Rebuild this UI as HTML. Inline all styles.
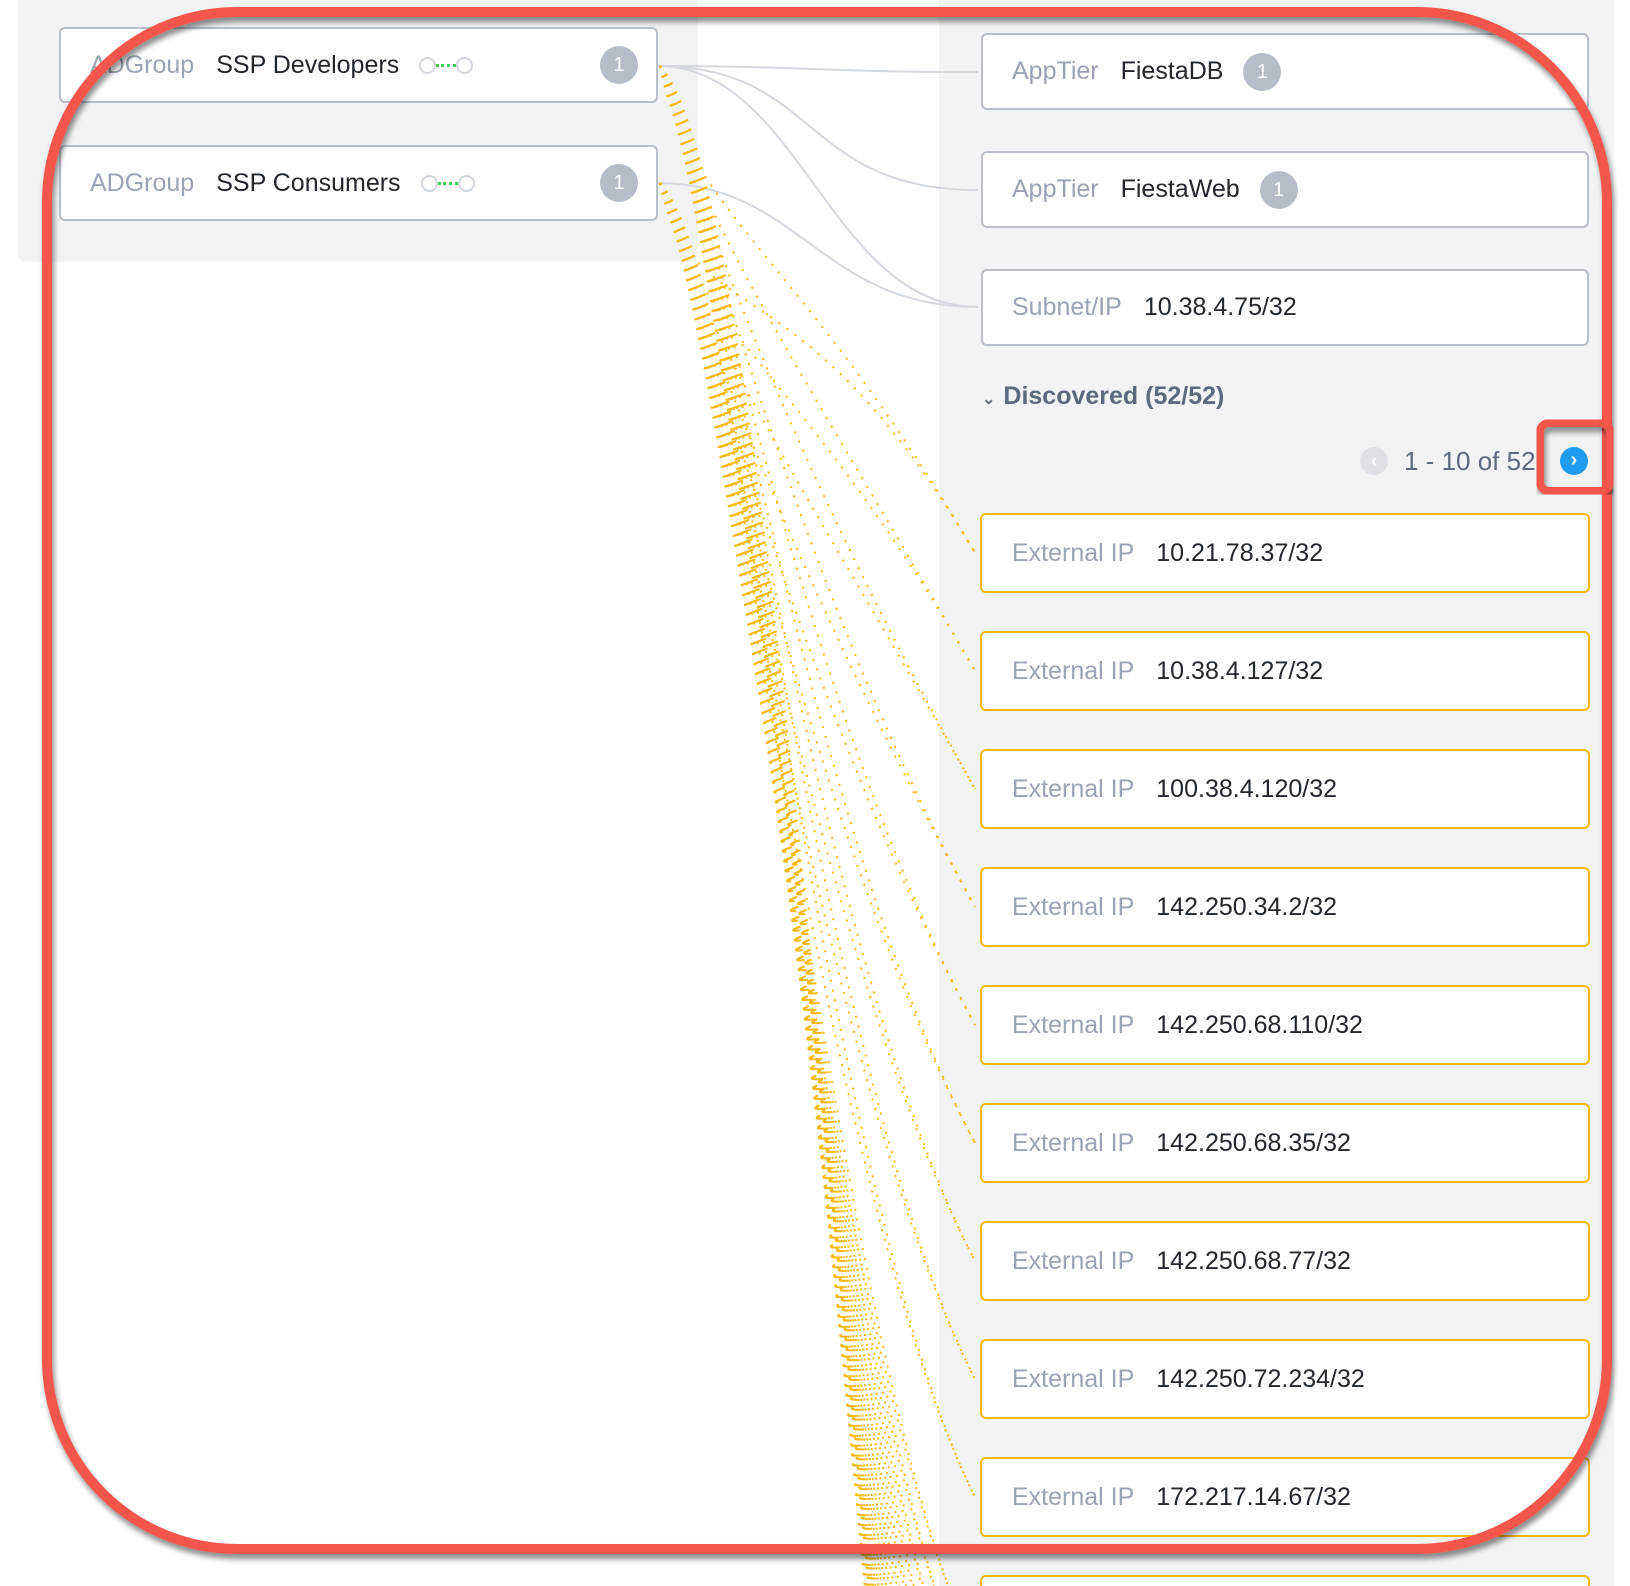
<!DOCTYPE html>
<html style="overflow:hidden;width:1630px;height:1586px"><head><meta charset="utf-8"><style>
*{box-sizing:border-box;margin:0;padding:0}
body{width:1630px;height:1586px;position:relative;overflow:hidden;background:#fff;font-family:"Liberation Sans",sans-serif}
.lp{position:absolute;left:18px;top:0;width:680px;height:262px;background:#f2f3f5;border-radius:0 0 8px 8px}
.rp{position:absolute;left:939px;top:0;width:675px;height:1586px;background:#f2f3f5}
.box{position:absolute;background:#fff;border:2px solid #b8bfcb;border-radius:6px;font-size:25px;display:flex;align-items:center}
.box .k{color:#9aa3b2;margin-right:22px}
.box .v{color:#22272e}
.badge{display:inline-block;width:38px;height:38px;border-radius:50%;background:#b7bdc8;color:#fff;font-size:20px;text-align:center;line-height:38px}
.ext{border-color:#fbb813}
.conn{display:inline-flex;align-items:center;margin-left:20px}
.conn i{display:block;width:17px;height:17px;border:2px solid #d3d7de;border-radius:50%}
.conn b{display:block;width:20px;border-top:3px dotted #3ccf5a}
#clip{position:absolute;left:0;top:0;width:1630px;height:1586px;overflow:hidden}
</style></head><body>
<div id="clip">
<div class="lp"></div>
<div class="rp"></div>
<svg id="s" style="position:absolute;left:0;top:0" width="1630" height="1586"></svg>
<div class="box" style="left:59px;top:27px;width:599px;height:76px;padding-left:29px"><span class="k">ADGroup</span><span class="v">SSP Developers</span><span class="conn"><i></i><b></b><i></i></span><span class="badge" style="position:absolute;left:539px;top:17px">1</span></div>
<div class="box" style="left:59px;top:145px;width:599px;height:76px;padding-left:29px"><span class="k">ADGroup</span><span class="v">SSP Consumers</span><span class="conn"><i></i><b></b><i></i></span><span class="badge" style="position:absolute;left:539px;top:17px">1</span></div>
<div class="box" style="left:981px;top:33px;width:608px;height:77px;padding-left:29px"><span class="k">AppTier</span><span class="v">FiestaDB</span><span class="badge" style="margin-left:20px">1</span></div>
<div class="box" style="left:981px;top:151px;width:608px;height:77px;padding-left:29px"><span class="k">AppTier</span><span class="v">FiestaWeb</span><span class="badge" style="margin-left:20px">1</span></div>
<div class="box" style="left:981px;top:269px;width:608px;height:77px;padding-left:29px"><span class="k">Subnet/IP</span><span class="v">10.38.4.75/32</span></div>
<div style="position:absolute;left:982px;top:382px;font-size:25px;font-weight:bold;color:#5d6a7e"><span style="font-size:16px;margin-right:8px">&#8964;</span>Discovered (52/52)</div>
<div style="position:absolute;left:1360px;top:447px;width:28px;height:28px;border-radius:50%;background:#dde0e5;color:#fff;font-size:18px;text-align:center;line-height:28px;font-weight:bold">&#8249;</div>
<div style="position:absolute;left:1404px;top:446px;font-size:26px;color:#5d6a7e">1 - 10 of 52</div>
<div style="position:absolute;left:1560px;top:447px;width:28px;height:28px;border-radius:50%;background:#1e9cf0;color:#fff;font-size:20px;text-align:center;line-height:26px;font-weight:bold">&#8250;</div>
<div id="ext"></div>
<svg style="position:absolute;left:0;top:0" width="1630" height="1586">
<defs><filter id="sh" x="-5%" y="-5%" width="110%" height="110%"><feDropShadow dx="2" dy="5" stdDeviation="3" flood-color="#000" flood-opacity="0.45"/></filter></defs>
<rect x="47" y="12" width="1560" height="1537" rx="190" fill="none" stroke="#f5574b" stroke-width="10" filter="url(#sh)"/>
<rect x="1540" y="423" width="70" height="68" rx="9" fill="none" stroke="#f5574b" stroke-width="8" filter="url(#sh)"/>
</svg>
</div>
<script>
var ips=["10.21.78.37/32","10.38.4.127/32","100.38.4.120/32","142.250.34.2/32","142.250.68.110/32","142.250.68.35/32","142.250.68.77/32","142.250.72.234/32","172.217.14.67/32"];
var h="";
for(var i=0;i<9;i++){var t=513+118*i;h+='<div class="box ext" style="left:980px;top:'+t+'px;width:610px;height:80px;padding-left:30px"><span class="k">External IP</span><span class="v">'+ips[i]+'</span></div>';}
h+='<div class="box ext" style="left:980px;top:1575px;width:610px;height:11px;border-bottom:none;border-radius:6px 6px 0 0"></div>';
document.getElementById("ext").innerHTML=h;
var s="";
s+='<g fill="none" stroke="#d3d8df" stroke-width="2">';
s+='<path d="M657,66 C800,66 820,72 978,72"/>';
s+='<path d="M657,66 C820,66 800,190 978,190"/>';
s+='<path d="M657,66 C800,66 830,307 978,307"/>';
s+='<path d="M657,183 C800,183 820,307 978,307"/>';
s+='</g><g fill="none" stroke="#f8b912" stroke-width="2" stroke-dasharray="2 8">';
var srcs=[66,183];
for(var k=0;k<2;k++){var sy=srcs[k];
for(var j=0;j<28;j++){var y=j<9?553+118*j:1650+(j-9)*45;
s+='<path d="M660,'+sy+' C'+(690+j*4)+','+(sy+150)+' '+(800+j*3)+','+(y-300)+' 975,'+y+'"/>';}}
s+='</g>';
document.getElementById("s").innerHTML=s;
</script>
</body></html>
